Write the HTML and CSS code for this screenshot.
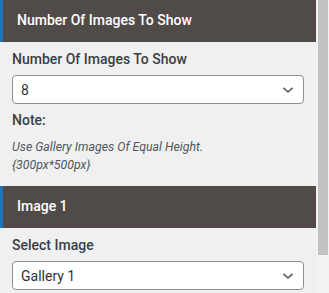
FILE: index.html
```html
<!DOCTYPE html>
<html lang="en">
<head>
<meta charset="utf-8">
<link rel="stylesheet" href="styles.css">
</head>
<body>
<div class="frame">
  <div class="panel">
    <div class="section-head"><span>Number Of Images To Show</span></div>
    <div class="section-body">
      <div class="field-label">Number Of Images To Show</div>
      <div class="select">
        <span class="select-value">8</span>
        <svg class="chevron" width="12" height="8" viewBox="0 0 12 8"><path d="M1.5 1.8 L6 6 L10.5 1.8" fill="none" stroke="#50575e" stroke-width="1.6"/></svg>
      </div>
      <div class="field-label note">Note:</div>
      <p class="hint">Use Gallery Images Of Equal Height.<br>{300px*500px}</p>
    </div>
    <div class="section-head"><span>Image 1</span></div>
    <div class="section-body">
      <div class="field-label">Select Image</div>
      <div class="select">
        <span class="select-value">Gallery 1</span>
        <svg class="chevron" width="12" height="8" viewBox="0 0 12 8"><path d="M1.5 1.8 L6 6 L10.5 1.8" fill="none" stroke="#50575e" stroke-width="1.6"/></svg>
      </div>
    </div>
  </div>
  <div class="scrollbar"><div class="scroll-thumb"></div></div>
</div>
</body>
</html>
```

FILE: styles.css
```css
html, body {
  margin: 0;
  height: 100%;
  overflow: hidden;
}
body {
  font-family: Roboto, "Liberation Sans", sans-serif;
  color: #3c434a;
  background: #f0f0f0;
}
.frame {
  display: flex;
  height: 293px;
}
.panel {
  flex: 1;
  min-width: 0;
  display: flex;
  flex-direction: column;
  overflow: hidden;
}
.scrollbar {
  width: 13px;
  box-sizing: border-box;
  padding: 0 1px 0 2px;
  background: #f3f3f3;
}
.scroll-thumb {
  height: 255px;
  background: #c1c1c1;
}
.section-head {
  flex: none;
  height: 42px;
  box-sizing: border-box;
  display: flex;
  align-items: center;
  padding: 0 0 2px 14px;
  background: #504b49;
  border-left: 3px solid #1f74bb;
  color: #ffffff;
  font-size: 14px;
  font-weight: 500;
  line-height: 20px;
}
.section-body {
  flex: none;
  padding: 7px 12px 12px;
  display: flex;
  flex-direction: column;
}
.field-label {
  font-size: 14px;
  font-weight: 500;
  line-height: 20px;
  color: #3a3f44;
}
.note {
  margin-top: 6px;
}
.select {
  margin-top: 6px;
  height: 29px;
  box-sizing: border-box;
  border: 1px solid #8c8f94;
  border-radius: 4px;
  background: #ffffff;
  display: flex;
  align-items: center;
  justify-content: space-between;
  padding: 0 8px;
}
.select-value {
  font-size: 14px;
  line-height: 20px;
  color: #2c3338;
}
.chevron {
  display: block;
  margin-right: 1px;
}
.hint {
  margin: 8px 0 0;
  font-size: 12.3px;
  line-height: 18px;
  font-style: italic;
  color: #50575e;
}
```
